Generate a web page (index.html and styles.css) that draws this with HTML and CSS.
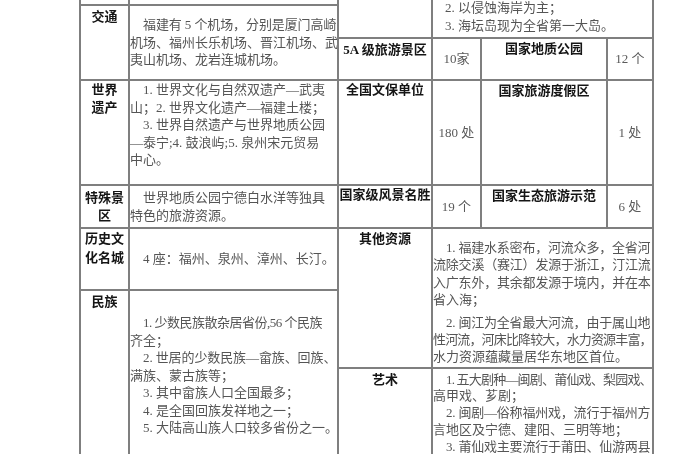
FILE: index.html
```html
<!DOCTYPE html>
<html lang="zh-CN">
<head>
<meta charset="utf-8">
<title>福建旅游资源</title>
<link rel="stylesheet" href="styles.css">
</head>
<body>
<div class="page">
  <div class="grid left">
    <div class="c"></div>
    <div class="c"></div>

    <div class="c lab pt2">交通</div>
    <div class="c txt mid">
      <div class="l i f1">福建有 5 个机场，分别是厦门高崎</div>
      <div class="l">机场、福州长乐机场、晋江机场、武</div>
      <div class="l">夷山机场、龙岩连城机场。</div>
    </div>

    <div class="c lab">世界<br>遗产</div>
    <div class="c txt">
      <div class="l i">1. 世界文化与自然双遗产—武夷</div>
      <div class="l">山；2. 世界文化遗产—福建土楼；</div>
      <div class="l i">3. 世界自然遗产与世界地质公园</div>
      <div class="l">—泰宁;4. 鼓浪屿;5. 泉州宋元贸易</div>
      <div class="l">中心。</div>
    </div>

    <div class="c lab mid">特殊景<br>区</div>
    <div class="c txt mid">
      <div class="l i">世界地质公园宁德白水洋等独具</div>
      <div class="l">特色的旅游资源。</div>
    </div>

    <div class="c lab tall">历史文<br>化名城</div>
    <div class="c txt mid">
      <div class="l i">4 座：福州、泉州、漳州、长汀。</div>
    </div>

    <div class="c lab pt2">民族</div>
    <div class="c txt pt23">
      <div class="l i f5">1. 少数民族散杂居省份,56 个民族</div>
      <div class="l">齐全；</div>
      <div class="l i f1">2. 世居的少数民族—畲族、回族、</div>
      <div class="l">满族、蒙古族等；</div>
      <div class="l i">3. 其中畲族人口全国最多；</div>
      <div class="l i">4. 是全国回族发祥地之一；</div>
      <div class="l i">5. 大陆高山族人口较多省份之一。</div>
    </div>
  </div>

  <div class="grid right">
    <div class="c"></div>
    <div class="c txt span3 bottom">
      <div class="l i">2. 以侵蚀海岸为主；</div>
      <div class="l i">3. 海坛岛现为全省第一大岛。</div>
    </div>

    <div class="c lab pt2">5A 级旅游景区</div>
    <div class="c val mid">10家</div>
    <div class="c lab pt1">国家地质公园</div>
    <div class="c val mid">12 个</div>

    <div class="c lab">全国文保单位</div>
    <div class="c val mid">180 处</div>
    <div class="c lab pt1">国家旅游度假区</div>
    <div class="c val mid">1 处</div>

    <div class="c lab">国家级风景名胜</div>
    <div class="c val mid">19 个</div>
    <div class="c lab pt1">国家生态旅游示范</div>
    <div class="c val mid">6 处</div>

    <div class="c lab pt1">其他资源</div>
    <div class="c txt span3 pt10 lh173">
      <div class="l i f2">1. 福建水系密布，河流众多，全省河</div>
      <div class="l f2">流除交溪（赛江）发源于浙江，汀江流</div>
      <div class="l f2">入广东外，其余都发源于境内，并在本</div>
      <div class="l">省入海；</div>
      <div class="l i para f2">2. 闽江为全省最大河流，由于属山地</div>
      <div class="l tight">性河流，河床比降较大，水力资源丰富，</div>
      <div class="l">水力资源蕴藏量居华东地区首位。</div>
    </div>

    <div class="c lab pt2">艺术</div>
    <div class="c txt span3 pt25 lh168">
      <div class="l i tight2">1. 五大剧种—闽剧、莆仙戏、梨园戏、</div>
      <div class="l">高甲戏、芗剧；</div>
      <div class="l i f2">2. 闽剧—俗称福州戏，流行于福州方</div>
      <div class="l">言地区及宁德、建阳、三明等地；</div>
      <div class="l i f2">3. 莆仙戏主要流行于莆田、仙游两县</div>
    </div>
  </div>
</div>
</body>
</html>
```

FILE: styles.css
```css
html, body {
  margin: 0;
  padding: 0;
  background: #ffffff;
}

.page {
  height: 454px;
  overflow: hidden;
  display: flex;
  align-items: flex-start;
  padding-left: 79px;
  font-family: "Liberation Serif", "Noto Sans CJK SC", serif;
  font-size: 13px;
  color: #555555;
  filter: blur(0.3px);
}

.grid {
  display: grid;
  gap: 2px;
  background: #7f7f7f;
}

.left {
  grid-template-columns: 47px 207px;
  grid-template-rows: 4px 73px 103px 41px 60px 200px;
  padding: 0 2px;
}

.right {
  grid-template-columns: 92px 47px 124px 44px;
  grid-template-rows: 37px 40px 103px 41px 138px 120px;
  padding: 0 2px 0 0;
}

.c {
  background: #ffffff;
  overflow: hidden;
  box-sizing: border-box;
}

.span3 {
  grid-column: span 3;
}

.lab {
  font-family: "Liberation Serif", "Noto Sans CJK SC", sans-serif;
  font-weight: 700;
  color: #151515;
  text-align: center;
  line-height: 17.5px;
  white-space: nowrap;
}

.lab.tall {
  line-height: 19px;
}

.val {
  text-align: center;
  line-height: 17.5px;
  color: #5a5a5a;
  white-space: nowrap;
}

.txt {
  line-height: 17.5px;
}

.l {
  white-space: nowrap;
}

.i {
  padding-left: 13px;
}

.right .bottom .i {
  padding-left: 12px;
}

.mid {
  display: flex;
  flex-direction: column;
  justify-content: center;
}

.bottom {
  display: flex;
  flex-direction: column;
  justify-content: flex-end;
  padding-bottom: 3px;
}

.pt1 { padding-top: 1px; }
.pt2 { padding-top: 2px; }
.pt10 { padding-top: 10px; }
.pt23 { padding-top: 23px; }
.pt25 { padding-top: 2.5px; }

.lh173 { line-height: 17.3px; }
.lh168 { line-height: 16.75px; }

.para { margin-top: 5.7px; }

.f1 { letter-spacing: -0.1px; }
.f2 { letter-spacing: -0.2px; }
.f5 { letter-spacing: -0.5px; }
.tight { letter-spacing: -0.85px; }
.tight2 { letter-spacing: -0.8px; }
```
